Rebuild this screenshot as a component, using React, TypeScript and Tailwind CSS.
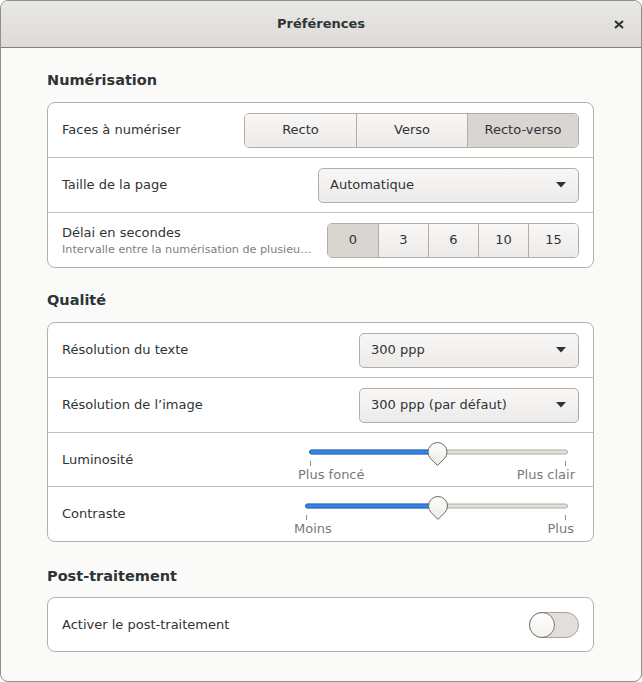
import type { ReactNode } from "react";

const SANS = "font-['DejaVu_Sans',sans-serif]";

function Row({
  title,
  subtitle,
  children,
  h = "h-[55px]",
}: {
  title: string;
  subtitle?: string;
  children: ReactNode;
  h?: string;
}) {
  return (
    <div className={`flex items-center justify-between pl-[14px] pr-[14px] ${h}`}>
      <div className="flex flex-col">
        <span className="text-[13px] leading-[16px] text-[#2e3436]">{title}</span>
        {subtitle ? (
          <span className="mt-[2px] text-[11.2px] leading-[13px] text-[#7d8082]">
            {subtitle}
          </span>
        ) : null}
      </div>
      {children}
    </div>
  );
}

function Segmented({
  items,
  selected,
  cellClass,
}: {
  items: string[];
  selected: number;
  cellClass: string;
}) {
  return (
    <div className="flex h-[35px] overflow-hidden rounded-[5px] border border-[#b5ada5]">
      {items.map((it, i) => (
        <div
          key={it}
          className={`flex items-center justify-center text-[13px] text-[#2e3436] ${cellClass} ${
            i > 0 ? "border-l border-[#b5ada5]" : ""
          } ${
            i === selected
              ? "bg-[#d9d5d1]"
              : "bg-gradient-to-b from-[#f8f7f6] to-[#edebe9]"
          }`}
        >
          {it}
        </div>
      ))}
    </div>
  );
}

function Dropdown({ value, widthClass }: { value: string; widthClass: string }) {
  return (
    <div
      className={`flex h-[35px] items-center justify-between rounded-[5px] border border-[#b5ada5] bg-gradient-to-b from-[#f8f7f6] to-[#edebe9] pl-[11px] pr-[12px] ${widthClass}`}
    >
      <span className="text-[13px] text-[#2e3436]">{value}</span>
      <svg width="10" height="6" viewBox="0 0 10 6">
        <path d="M0 0 L10 0 L5 5.5 Z" fill="#2e3436" />
      </svg>
    </div>
  );
}

function Slider({
  width,
  start,
  end,
  knob,
  left,
  right,
}: {
  width: number;
  start: number;
  end: number;
  knob: number;
  left: string;
  right: string;
}) {
  const cy = 14;
  const tip = cy + 9.5 * Math.SQRT2;
  const d = 9.5 * Math.SQRT1_2;
  return (
    <div className="flex flex-col" style={{ width }}>
      <svg width={width} height="29" viewBox={`0 0 ${width} 29`}>
        <defs>
          <linearGradient id={`k${width}`} x1="0" y1="0" x2="0" y2="1">
            <stop offset="0" stopColor="#ffffff" />
            <stop offset="1" stopColor="#ebe9e6" />
          </linearGradient>
        </defs>
        <rect
          x={start - 0.5}
          y={cy - 2}
          width={end - start + 1}
          height="4"
          rx="2"
          fill="#e3e0dc"
          stroke="#b1aaa3"
          strokeWidth="1"
        />
        <rect
          x={start - 0.5}
          y={cy - 2}
          width={knob - start}
          height="4"
          rx="2"
          fill="#3584e4"
          stroke="#1c62c4"
          strokeWidth="1"
        />
        <line x1={start + 0.5} y1="23" x2={start + 0.5} y2="28" stroke="#8a8d8e" />
        <line x1={end - 1.5} y1="23" x2={end - 1.5} y2="28" stroke="#8a8d8e" />
        <path
          d={`M${knob - d} ${cy + d} A9.5 9.5 0 1 1 ${knob + d} ${cy + d} L${knob} ${tip} Z`}
          fill={`url(#k${width})`}
          stroke="#6f6a65"
          strokeWidth="1"
        />
      </svg>
      <div className="flex justify-between text-[13px] leading-[15px] text-[#767a7b]">
        <span>{left}</span>
        <span>{right}</span>
      </div>
    </div>
  );
}

function Heading({ children, className }: { children: ReactNode; className: string }) {
  return (
    <h2
      className={`h-[20px] text-[14.5px] font-bold leading-[20px] text-[#2e3436] ${className}`}
    >
      {children}
    </h2>
  );
}

export default function App() {
  return (
    <div
      className={`${SANS} flex h-[682px] w-[642px] flex-col overflow-hidden rounded-[8px] border border-[#8f8f8f] bg-[#fafaf9]`}
    >
      <div className="relative flex h-[47px] shrink-0 items-center justify-center border-b border-[#857d76] bg-gradient-to-b from-[#e9e8e5] to-[#dedbd7]">
        <span className="text-[13px] font-bold text-[#2e3436]">Préférences</span>
        <svg
          className="absolute right-[17px] top-[19px]"
          width="10"
          height="9"
          viewBox="0 0 10 9"
        >
          <path d="M1 1 L9 8 M9 1 L1 8" stroke="#2e3436" strokeWidth="2.2" />
        </svg>
      </div>

      <div className="flex flex-col pl-[46px] pr-[47px] pt-[22px]">
        <Heading className="mb-[12px]">Numérisation</Heading>
        <div className="flex flex-col divide-y divide-[#c6bfb8] rounded-[8px] border border-[#b8b0a8] bg-white">
          <Row title="Faces à numériser">
            <Segmented
              items={["Recto", "Verso", "Recto-verso"]}
              selected={2}
              cellClass="w-[111px]"
            />
          </Row>
          <Row title="Taille de la page">
            <Dropdown value="Automatique" widthClass="w-[261px]" />
          </Row>
          <Row
            title="Délai en secondes"
            subtitle="Intervalle entre la numérisation de plusieu…"
            h="h-[54px]"
          >
            <Segmented
              items={["0", "3", "6", "10", "15"]}
              selected={0}
              cellClass="w-[50px]"
            />
          </Row>
        </div>

        <Heading className="mb-[12px] mt-[22px]">Qualité</Heading>
        <div className="flex flex-col divide-y divide-[#c6bfb8] rounded-[8px] border border-[#b8b0a8] bg-white">
          <Row title="Résolution du texte">
            <Dropdown value="300 ppp" widthClass="w-[220px]" />
          </Row>
          <Row title="Résolution de l’image">
            <Dropdown value="300 ppp (par défaut)" widthClass="w-[220px]" />
          </Row>
          <div className="flex h-[54px] items-center justify-between pl-[14px] pr-[18px]">
            <span className="text-[13px] text-[#2e3436]">Luminosité</span>
            <Slider
              width={277}
              start={12}
              end={269}
              knob={139.5}
              left="Plus foncé"
              right="Plus clair"
            />
          </div>
          <div className="flex h-[54px] items-center justify-between pl-[14px] pr-[19px]">
            <span className="text-[13px] text-[#2e3436]">Contraste</span>
            <Slider width={280} start={12} end={273} knob={144} left="Moins" right="Plus" />
          </div>
        </div>

        <Heading className="mb-[11px] mt-[24px]">Post-traitement</Heading>
        <div className="flex flex-col rounded-[8px] border border-[#b8b0a8] bg-white">
          <Row title="Activer le post-traitement" h="h-[53px]">
            <div className="flex h-[26px] w-[50px] items-center rounded-full border border-[#aaa29a] bg-[#e1dedb]">
              <div className="-ml-px h-[26px] w-[26px] rounded-full border border-[#7e7770] bg-gradient-to-b from-white to-[#f3f2f0]" />
            </div>
          </Row>
        </div>
      </div>
    </div>
  );
}
